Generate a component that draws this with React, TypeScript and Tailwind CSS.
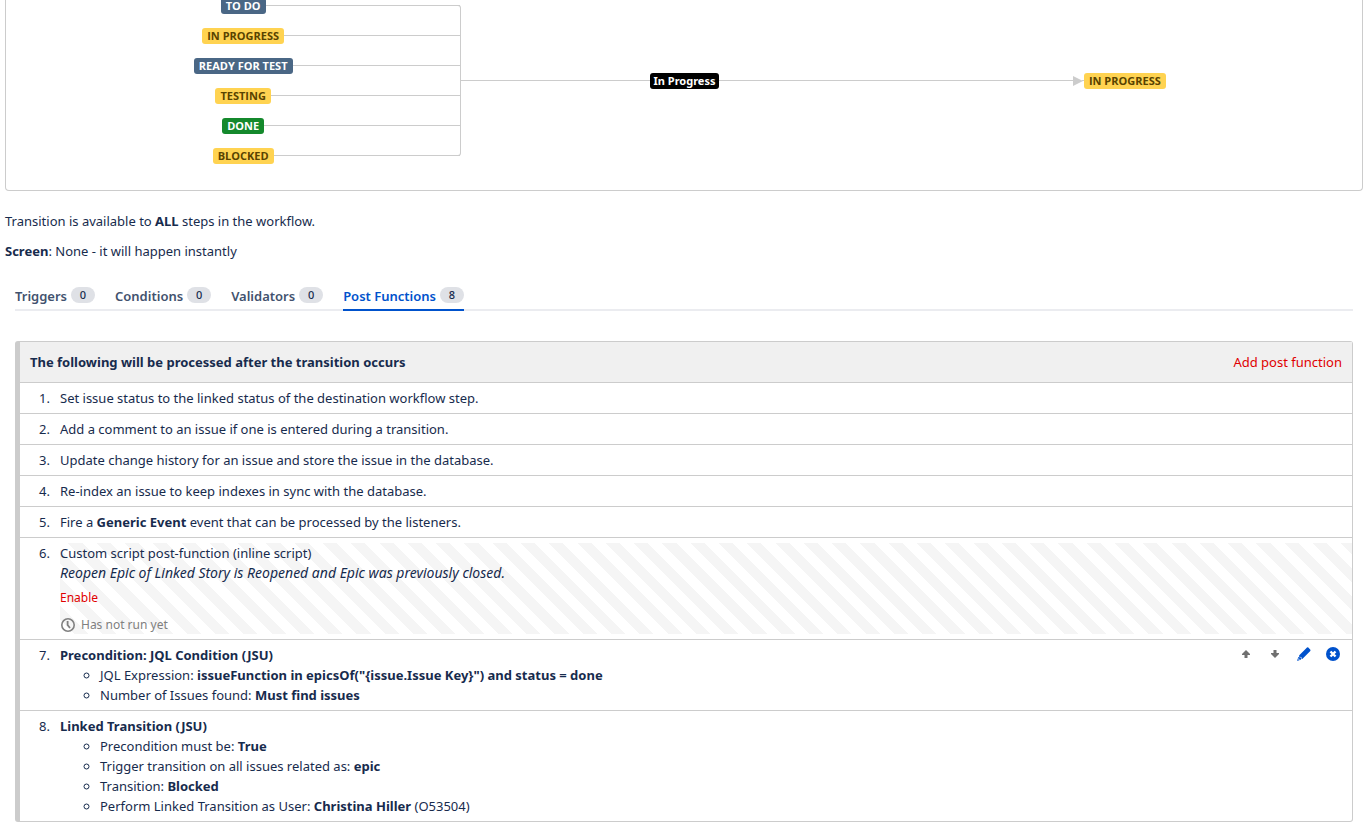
import type { ReactNode } from "react";
import clsx from "clsx";

type Tone = "blue" | "yellow" | "green" | "black";

const tones: Record<Tone, string> = {
  blue: "bg-[#4a6785] text-white uppercase",
  yellow: "bg-[#ffd351] text-[#594300] uppercase",
  green: "bg-[#14892c] text-white uppercase",
  black: "bg-black text-white",
};

const sources: { name: string; tone: Tone }[] = [
  { name: "To Do", tone: "blue" },
  { name: "In Progress", tone: "yellow" },
  { name: "Ready for test", tone: "blue" },
  { name: "Testing", tone: "yellow" },
  { name: "Done", tone: "green" },
  { name: "Blocked", tone: "yellow" },
];

const tabs = [
  { name: "Triggers", count: 0 },
  { name: "Conditions", count: 0 },
  { name: "Validators", count: 0 },
  { name: "Post Functions", count: 8 },
];

export default function App() {
  return (
    <main className="bg-white pb-3 font-['Noto_Sans','Open_Sans',sans-serif] text-[13px] leading-5 text-[#172b4d]">
      <Diagram />

      <div className="ml-[5px] mt-5 space-y-[10px]">
        <p>
          Transition is available to <b>ALL</b> steps in the workflow.
        </p>
        <p>
          <b>Screen</b>: None - it will happen instantly
        </p>
      </div>

      <div className="ml-[15px] mr-[10px]">
        <Tabs active="Post Functions" />
        <PostFunctions />
      </div>
    </main>
  );
}

function Diagram() {
  return (
    <section className="ml-[5px] flex rounded-b border border-t-0 border-[#ccc] px-5 pb-[19px]">
      {/* source statuses */}
      <ul className="-mt-[9px] w-[33%]">
        {sources.map((s) => (
          <li key={s.name} className="grid h-[30px] grid-cols-[1fr_auto_1fr] items-center">
            <span />
            <Lozenge tone={s.tone}>{s.name}</Lozenge>
            <Line />
          </li>
        ))}
      </ul>

      {/* transition */}
      <div className="-mt-[9px] flex flex-1 items-center">
        <div className="-ml-[2px] mb-[15px] mt-[14px] w-[3px] self-stretch rounded-r-[3px] border border-l-0 border-[#ccc]" />
        <Line />
        <Lozenge tone="black">In Progress</Lozenge>
        <Line />
      </div>

      {/* destination */}
      <div className="-mt-[9px] grid w-[33%] grid-cols-[1fr_auto_1fr] items-center">
        <div className="flex items-center">
          <Line />
          <svg width="11" height="10" viewBox="0 0 11 10" aria-hidden="true">
            <path d="M0 0 L10 5 L0 10 Z" fill="#ccc" />
            <path d="M9 4 H11 V5 H9 Z" fill="#ccc" />
          </svg>
        </div>
        <Lozenge tone="yellow">In Progress</Lozenge>
        <span />
      </div>
    </section>
  );
}

function Line() {
  return <div className="h-[2px] flex-1 border-t border-[#ccc]" />;
}

function Lozenge({ tone, children }: { tone: Tone; children: ReactNode }) {
  return (
    <span
      className={clsx(
        "block whitespace-nowrap rounded-[3px] font-bold leading-4",
        tone === "black" ? "px-1 text-[11px]" : "px-[5px] font-['Open_Sans',sans-serif] text-[11px]",
        tones[tone]
      )}
    >
      {children}
    </span>
  );
}

function Tabs({ active }: { active: string }) {
  return (
    <div role="tablist" className="mt-[25px] flex gap-5 border-b-2 border-[#ebecf0]">
      {tabs.map((t) => (
        <button
          key={t.name}
          role="tab"
          aria-selected={t.name === active}
          className={clsx(
            "-mb-[2px] flex gap-1 border-b-2 pb-[3px] font-semibold",
            t.name === active ? "border-[#0052cc] text-[#0052cc]" : "border-transparent text-[#42526e]"
          )}
        >
          {t.name}
          <span className="mt-[1px] h-4 w-6 rounded-full bg-[#dfe1e6] text-center text-[11px] font-medium leading-4 text-[#172b4d]">
            {t.count}
          </span>
        </button>
      ))}
    </div>
  );
}

function PostFunctions() {
  return (
    <section className="mt-[30px] rounded-[3px] border border-l-[5px] border-[#ccc]">
      <header className="flex items-center justify-between bg-[#f0f0f0] p-[10px]">
        <h2 className="font-bold">The following will be processed after the transition occurs</h2>
        <a href="#add" className="text-[#e00000]">
          Add post function
        </a>
      </header>
      <ol>
        <Item n={1}>Set issue status to the linked status of the destination workflow step.</Item>
        <Item n={2}>Add a comment to an issue if one is entered during a transition.</Item>
        <Item n={3}>Update change history for an issue and store the issue in the database.</Item>
        <Item n={4}>Re-index an issue to keep indexes in sync with the database.</Item>
        <Item n={5}>
          Fire a <b>Generic Event</b> event that can be processed by the listeners.
        </Item>
        <Item n={6}>
          <div className="bg-[repeating-linear-gradient(45deg,#fff_0_10px,#f5f5f5_10px_20px)]">
            <p>Custom script post-function (inline script)</p>
            <p className="text-[14px] italic leading-5">
              Reopen Epic of Linked Story is Reopened and Epic was previously closed.
            </p>
            <a href="#enable" className="mt-[5px] block w-fit text-[12px] text-[#e00000]">
              Enable
            </a>
            <p className="mt-2 flex items-center gap-[6px] text-[12px] leading-[18px] text-[#808080]">
              <ClockIcon />
              Has not run yet
            </p>
          </div>
        </Item>
        <Item n={7} actions={<Actions />}>
          <b>Precondition: JQL Condition (JSU)</b>
          <Params>
            <li>
              JQL Expression: <b>issueFunction in epicsOf("{"{issue.Issue Key}"}") and status = done</b>
            </li>
            <li>
              Number of Issues found: <b>Must find issues</b>
            </li>
          </Params>
        </Item>
        <Item n={8}>
          <b>Linked Transition (JSU)</b>
          <Params>
            <li>
              Precondition must be: <b>True</b>
            </li>
            <li>
              Trigger transition on all issues related as: <b>epic</b>
            </li>
            <li>
              Transition: <b>Blocked</b>
            </li>
            <li>
              Perform Linked Transition as User: <b>Christina Hiller</b> (O53504)
            </li>
          </Params>
        </Item>
      </ol>
    </section>
  );
}

function Item({ n, actions, children }: { n: number; actions?: ReactNode; children: ReactNode }) {
  return (
    <li className="flex border-t border-[#ccc] py-[5px]">
      <span className="w-[30px] shrink-0 text-right">{n}.</span>
      <div className="ml-[10px] min-w-0 flex-1">{children}</div>
      {actions}
    </li>
  );
}

function Params({ children }: { children: ReactNode }) {
  return <ul className="list-[circle] pl-10">{children}</ul>;
}

function Actions() {
  return (
    <div className="mr-3 flex h-[18px] items-center gap-[15px]">
      <button aria-label="Move up">
        <svg width="14" height="14" viewBox="0 0 14 14" fill="#707070">
          <path d="M7 3 L11 7 V8 H8.5 V11 H5.5 V8 H3 V7 Z" />
        </svg>
      </button>
      <button aria-label="Move down">
        <svg width="14" height="14" viewBox="0 0 14 14" fill="#707070">
          <path d="M7 11 L11 7 V6 H8.5 V3 H5.5 V6 H3 V7 Z" />
        </svg>
      </button>
      <button aria-label="Edit">
        <svg width="14" height="14" viewBox="0 0 14 14" fill="#0052cc">
          <path d="M10 0.6 Q10.6 0.1 11.3 0.6 L13.2 2.5 Q13.8 3.2 13.3 3.9 L5.8 11.4 Q5.2 12 4.6 11.9 L4.4 10 L2 9.7 Q1.9 8.7 2.5 8.1 Z" />
          <path d="M1.4 10.1 L3.9 10.4 L4.1 12.6 L0.8 13.8 Q0 14 0.2 13.2 Z" />
          <path d="M1.5 11.2 L2.9 12.6 L1.9 12.8 L1.2 12.2 Z" fill="#fff" />
        </svg>
      </button>
      <button aria-label="Delete">
        <svg width="14" height="14" viewBox="0 0 14 14">
          <circle cx="7" cy="7" r="7" fill="#0052cc" />
          <path d="M4.5 4.5 L9.5 9.5 M9.5 4.5 L4.5 9.5" stroke="#fff" strokeWidth="2.4" />
        </svg>
      </button>
    </div>
  );
}

function ClockIcon() {
  return (
    <svg width="15" height="15" viewBox="0 0 15 15" fill="none" stroke="#808080" aria-hidden="true">
      <circle cx="8" cy="7" r="6.2" strokeWidth="1.6" />
      <path d="M7.6 3 V7 L10 10" strokeWidth="1.8" />
    </svg>
  );
}
